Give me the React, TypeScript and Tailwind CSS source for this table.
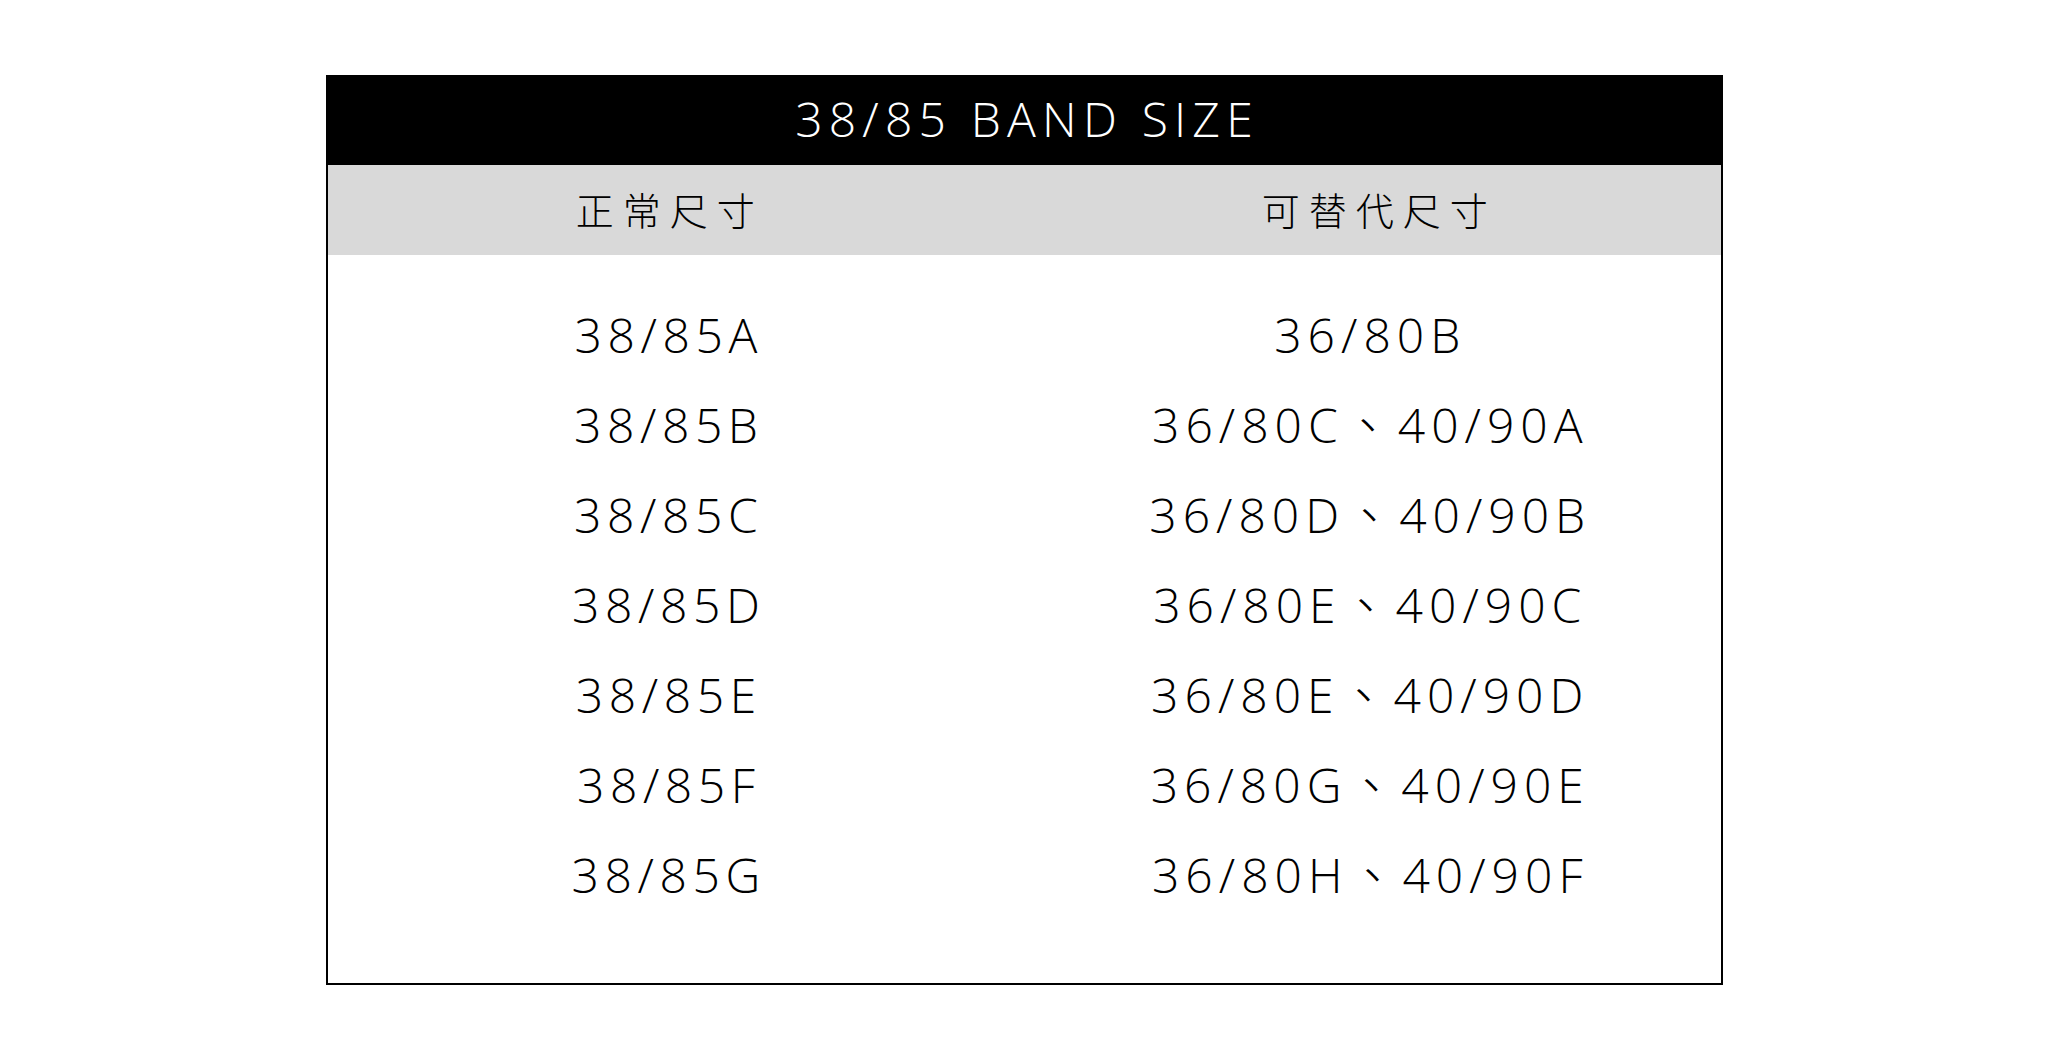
import React from 'react';

const rows: [string, string][] = [
  ['38/85A', '36/80B'],
  ['38/85B', '36/80C、40/90A'],
  ['38/85C', '36/80D、40/90B'],
  ['38/85D', '36/80E、40/90C'],
  ['38/85E', '36/80E、40/90D'],
  ['38/85F', '36/80G、40/90E'],
  ['38/85G', '36/80H、40/90F'],
];

const sans = "font-['Open_Sans','Noto_Sans_CJK_TC',sans-serif]";

export default function App() {
  return (
    <div className={`min-h-screen w-full bg-white pt-[75px] ${sans}`}>
      <div className="mx-auto w-[1397px] border-2 border-black bg-white">
        <div className="flex h-[88px] items-center justify-center bg-black pb-[4px]">
          <h1 className="pl-[6px] text-[48px] font-light tracking-[6.2px] text-white">38/85 BAND SIZE</h1>
        </div>
        <div className="grid h-[90px] grid-cols-2 items-center bg-[#d9d9d9] text-center text-[38px] font-light tracking-[9px] text-black">
          <div className="pr-[12px]">正常尺寸</div>
          <div className="pl-[14px]">可替代尺寸</div>
        </div>
        <div className="pb-[63px] pt-[35px]">
          {rows.map(([normal, alt]) => (
            <div key={normal} className="grid h-[90px] grid-cols-2 items-center text-center text-[48px] font-light text-black">
              <div className="pr-[14px] tracking-[5.6px]">{normal}</div>
              <div className="pr-[4px] tracking-[6px]">{alt}</div>
            </div>
          ))}
        </div>
      </div>
    </div>
  );
}
